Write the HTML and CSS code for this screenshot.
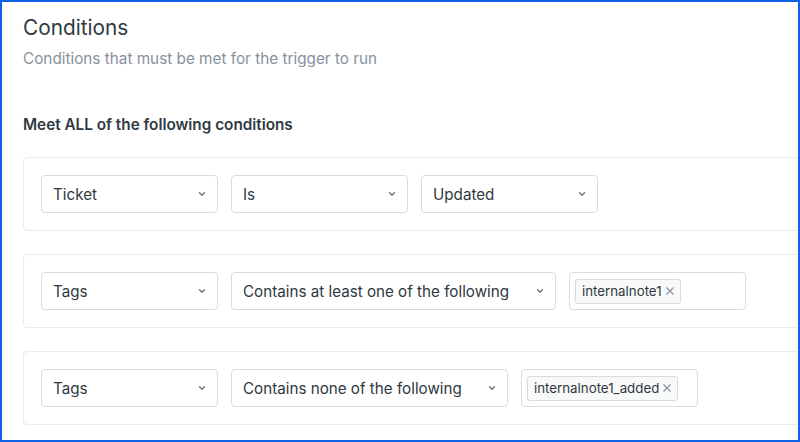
FILE: index.html
```html
<!DOCTYPE html>
<html>
<head>
<meta charset="utf-8">
<link rel="stylesheet" href="styles.css">
</head>
<body>
<div class="frame">
  <h1 class="title">Conditions</h1>
  <p class="subtitle">Conditions that must be met for the trigger to run</p>
  <h2 class="group-label">Meet ALL of the following conditions</h2>
  <div class="cards">
    <div class="card">
      <div class="select w177"><span>Ticket</span><svg class="chev" viewBox="0 0 12 12"><path d="M3.5 4.8l2.5 2.5 2.5-2.5"/></svg></div>
      <div class="select w177"><span>Is</span><svg class="chev" viewBox="0 0 12 12"><path d="M3.5 4.8l2.5 2.5 2.5-2.5"/></svg></div>
      <div class="select w177"><span>Updated</span><svg class="chev" viewBox="0 0 12 12"><path d="M3.5 4.8l2.5 2.5 2.5-2.5"/></svg></div>
    </div>
    <div class="card">
      <div class="select w177"><span>Tags</span><svg class="chev" viewBox="0 0 12 12"><path d="M3.5 4.8l2.5 2.5 2.5-2.5"/></svg></div>
      <div class="select w325"><span>Contains at least one of the following</span><svg class="chev" viewBox="0 0 12 12"><path d="M3.5 4.8l2.5 2.5 2.5-2.5"/></svg></div>
      <div class="tags w177"><span class="tag">internalnote1<svg class="x" viewBox="0 0 10 10"><path d="M1.5 1.5l7 7M8.5 1.5l-7 7"/></svg></span></div>
    </div>
    <div class="card">
      <div class="select w177"><span>Tags</span><svg class="chev" viewBox="0 0 12 12"><path d="M3.5 4.8l2.5 2.5 2.5-2.5"/></svg></div>
      <div class="select w277"><span>Contains none of the following</span><svg class="chev" viewBox="0 0 12 12"><path d="M3.5 4.8l2.5 2.5 2.5-2.5"/></svg></div>
      <div class="tags w177"><span class="tag">internalnote1_added<svg class="x" viewBox="0 0 10 10"><path d="M1.5 1.5l7 7M8.5 1.5l-7 7"/></svg></span></div>
    </div>
  </div>
</div>
</body>
</html>
```
FILE: styles.css
```css
html, body { margin: 0; padding: 0; background: #fff; }
body { font-family: Inter, "Noto Sans", sans-serif; color: #2f3941; }
.frame {
  width: 800px; height: 442px; box-sizing: border-box;
  border: 2px solid #0f62e6; overflow: hidden;
  padding: 0 0 0 21px;
}
.title { margin: 12px 0 0; font-size: 20.8px; font-weight: 400; line-height: 28px; color: #2f3941; }
.subtitle { margin: 7px 0 0; font-size: 15.3px; line-height: 20px; color: #87929d; }
.group-label { margin: 46px 0 0; font-size: 15.3px; font-weight: 600; line-height: 20px; color: #2f3941; }
.cards { margin-top: 22px; display: flex; flex-direction: column; gap: 23px; width: 820px; }
.card {
  border: 1px solid #e9ebed; border-radius: 4px;
  padding: 17px 17px; display: flex; gap: 13px; align-items: center;
}
.select, .tags {
  height: 38px; box-sizing: border-box; border: 1px solid #d8dcde; border-radius: 4px;
  display: flex; align-items: center; flex: none;
}
.select { padding: 0 9px 0 11px; justify-content: space-between; font-size: 15.2px; }
.w177 { width: 177px; }
.w325 { width: 325px; }
.w277 { width: 277px; }
.chev { width: 12px; height: 12px; fill: none; stroke: #68737d; stroke-width: 1.3; stroke-linecap: round; stroke-linejoin: round; }
.tags { padding: 0 5px; }
.tag {
  display: inline-flex; align-items: center; gap: 3px; height: 25px; box-sizing: border-box;
  padding: 0 5px 0 6px; background: #f8f9f9; border: 1px solid #d8dcde; border-radius: 3px;
  font-size: 13.3px; color: #2f3941;
}
.x { width: 10px; height: 10px; fill: none; stroke: #87929d; stroke-width: 1.1; }
```
